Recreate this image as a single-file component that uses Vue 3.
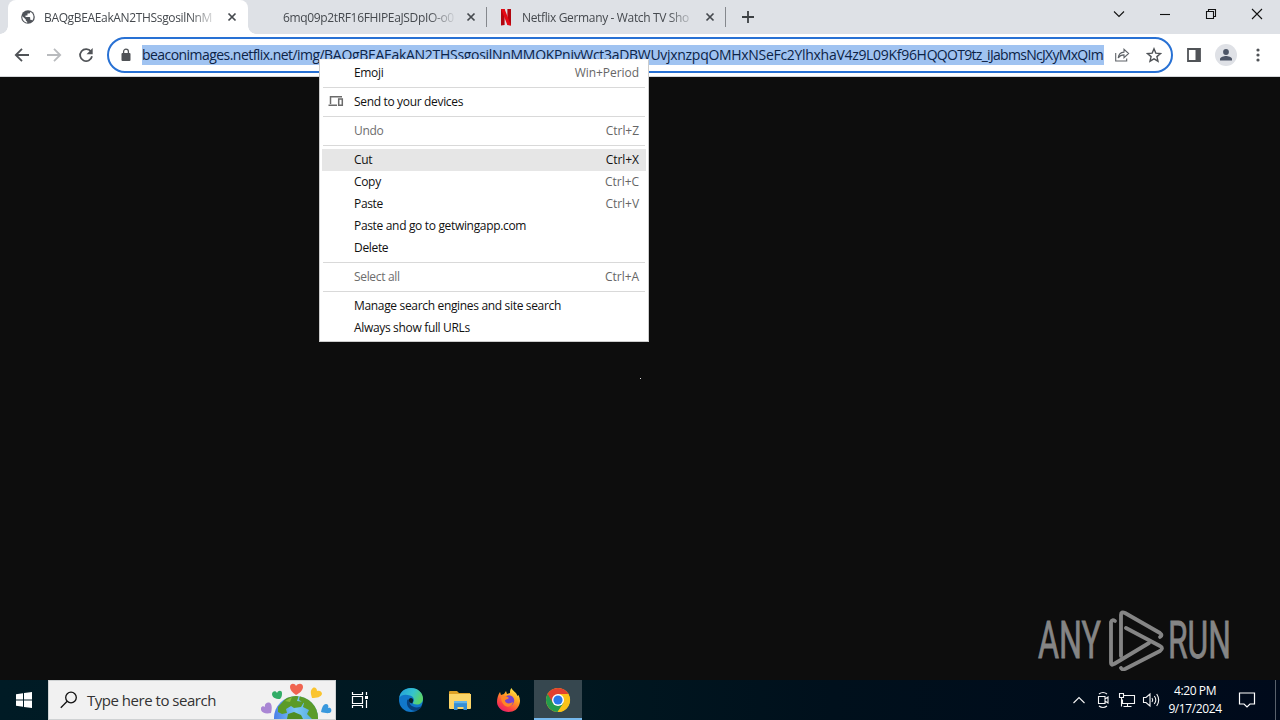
<script setup>
import { ref } from 'vue'

const tabs = ref([
  { id: 1, title: 'BAQgBEAEakAN2THSsgosilNnM', icon: 'globe', active: true },
  { id: 2, title: '6mq09p2tRF16FHIPEaJSDpIO-o0', icon: '', active: false },
  { id: 3, title: 'Netflix Germany - Watch TV Sho', icon: 'netflix', active: false }
])

const urlHost = ref('beaconimages.netflix.net/img/')
const urlPath = ref('BAQgBEAEakAN2THSsgosilNnMMQKPnivWct3aDBWUvjxnzpqOMHxNSeFc2YlhxhaV4z9L09Kf96H')
const urlTail = ref('QQOT9tz_iJabmsNcJXyMxQIm')

const menuGroups = [
  [{ label: 'Emoji', keys: 'Win+Period' }],
  [{ label: 'Send to your devices', icon: true }],
  [{ label: 'Undo', keys: 'Ctrl+Z', disabled: true }],
  [
    { label: 'Cut', keys: 'Ctrl+X', hover: true },
    { label: 'Copy', keys: 'Ctrl+C' },
    { label: 'Paste', keys: 'Ctrl+V' },
    { label: 'Paste and go to getwingapp.com' },
    { label: 'Delete' }
  ],
  [{ label: 'Select all', keys: 'Ctrl+A', disabled: true }],
  [
    { label: 'Manage search engines and site search' },
    { label: 'Always show full URLs' }
  ]
]
</script>

<template>
  <div class="desktop">
    <div class="tab-strip">
      <div v-for="tab in tabs" :key="tab.id" class="tab" :class="{ 'is-active': tab.active }">
        <span class="tab-icon">
          <svg v-if="tab.icon === 'globe'" width="14" height="14" viewBox="0 0 14 14">
            <circle cx="7" cy="7" r="6.8" fill="#50545a" />
            <path d="M1.4 6.2 4.8 9.4v1.2l1.4 1.2v.9C3.500 12.400 1.300 10 1.300 7zM9.200 1.700v.5c0 .8-.6 1.400-1.400 1.400H6.500v1.300c0 .4-.3.700-.7.700H4.500V7h4c.4 0 .7.300.7.700v2h.7c.6 0 1.100.4 1.300.9 2.500-3 1.300-7.500-2-8.900z" fill="#fff" />
          </svg>
          <svg v-else-if="tab.icon === 'netflix'" class="netflix" width="14" height="18" viewBox="0 0 14 18">
            <path d="M2 1h3.600v16L2 17.400zM8.400 1H12v16.400L8.400 17z" fill="#b1060f" />
            <path d="M2 1h3.600L12 17.400 8.400 17z" fill="#e50914" />
          </svg>
        </span>
        <span class="tab-title">{{ tab.title }}</span>
        <svg class="tab-close" width="10" height="10" viewBox="0 0 10 10">
          <path d="M1.500 1.500l7 7M8.500 1.500l-7 7" stroke="#45494e" stroke-width="1.700" />
        </svg>
      </div>
      <svg class="new-tab" width="14" height="14" viewBox="0 0 14 14">
        <path d="M7 1v12M1 7h12" stroke="#3c4043" stroke-width="1.800" />
      </svg>
      <div class="window-controls">
        <svg width="46" height="28" viewBox="0 0 46 28"><path d="M18 11.500l5 5 5-5" /></svg>
        <svg width="46" height="28" viewBox="0 0 46 28"><path d="M18 14.500h10" /></svg>
        <svg width="46" height="28" viewBox="0 0 46 28"><path d="M18.500 11.500h7v7h-7zM20.500 11.500v-2h7v7h-2" /></svg>
        <svg width="46" height="28" viewBox="0 0 46 28"><path d="M18 9l10 10M28 9l-10 10" /></svg>
      </div>
    </div>

    <div class="toolbar">
      <div class="nav-buttons">
        <svg width="16" height="16" viewBox="0 0 16 16"><path d="M15 8H2M8 1.800 1.800 8 8 14.200" /></svg>
        <svg class="is-disabled" width="16" height="16" viewBox="0 0 16 16"><path d="M1 8h13M8 1.800 14.200 8 8 14.200" /></svg>
        <svg width="16" height="16" viewBox="0 0 16 16">
          <path d="M13 4.600A6 6 0 1 0 14 9.300" />
          <path d="M14.700 1v6.200H8.500z" fill="#505357" stroke="none" />
        </svg>
      </div>
      <div class="address-bar">
        <svg class="lock" width="10" height="14" viewBox="0 0 10 14">
          <rect x="0.500" y="5" width="9" height="8" rx="1" fill="#505357" />
          <path d="M2.600 5.500V3.600a2.400 2.400 0 0 1 4.800 0v1.900" fill="none" stroke="#505357" stroke-width="1.300" />
        </svg>
        <div class="url"><span class="url-host">{{ urlHost }}</span><span class="url-path">{{ urlPath }}</span><span class="url-tail">{{ urlTail }}</span></div>
        <svg class="share" width="16" height="16" viewBox="0 0 16 16">
          <path d="M1.700 6v8h11v-2.500M4.200 11c.4-3.800 2.500-5.700 5.800-5.900V2.300l4.600 4.200L10 10.700V7.900C7.200 7.900 5.500 9 4.200 11z" fill="none" stroke="#5f6368" stroke-width="1.100" />
        </svg>
        <svg class="star" width="16" height="16" viewBox="0 0 16 16">
          <path d="M8 1.800l1.800 4.300 4.700.4-3.600 3.100 1.100 4.600L8 11.800l-4 2.400 1.100-4.600L1.500 6.500l4.700-.4z" fill="none" stroke="#505357" stroke-width="1.400" />
        </svg>
      </div>
      <svg class="side-panel" width="14" height="14" viewBox="0 0 14 14">
        <path d="M1 1h12v12H1z" fill="none" stroke="#505357" stroke-width="1.800" />
        <path d="M8.500 1H13v12H8.500z" fill="#505357" />
      </svg>
      <svg class="avatar" width="22" height="22" viewBox="0 0 22 22">
        <circle cx="11" cy="11" r="11" fill="#dfe1e6" />
        <circle cx="11" cy="8" r="2.900" fill="#4d5566" />
        <path d="M5 16.500v-1.400c0-2 4-3 6-3s6 1 6 3v1.400z" fill="#4d5566" />
      </svg>
      <svg class="more" width="4" height="14" viewBox="0 0 4 14">
        <circle cx="2" cy="2" r="1.600" /><circle cx="2" cy="7" r="1.600" /><circle cx="2" cy="12" r="1.600" />
      </svg>
    </div>

    <div class="page">
      <span class="image-dot"></span>
      <svg class="watermark" width="196" height="64" viewBox="0 0 196 64">
        <g fill="#858585" stroke="#858585" stroke-width="0.800" font-family="Roboto, sans-serif" font-size="51">
          <text x="3" y="51" textLength="63" lengthAdjust="spacingAndGlyphs">ANY</text>
          <text x="133" y="51" textLength="63" lengthAdjust="spacingAndGlyphs">RUN</text>
        </g>
        <g fill="none" stroke="#858585" stroke-width="3.800" stroke-linejoin="round" stroke-linecap="round">
          <path d="M86 49V8q0-4 4-2l35 20q3 2 0 4" />
          <path d="M80 14q-3-2-4 1v41q0 3 3 1l35-21" />
          <path d="M91 21l34 18q4 2 0 5L90 62q-3 1-4-1" />
        </g>
      </svg>
    </div>

    <div class="taskbar">
      <div class="start">
        <svg width="16" height="16" viewBox="0 0 16 16">
          <path d="M0 2.300 7 1.300v6.200H0zM8 1.100 16 0v7.500H8zM0 8.500h7v6.200L0 13.700zM8 8.500h8V16l-8-1.100z" fill="#fff" />
        </svg>
      </div>
      <div class="search">
        <svg class="search-icon" width="18" height="18" viewBox="0 0 18 18">
          <circle cx="11" cy="6.500" r="5.300" /><path d="M7.200 10.300.800 16.700" />
        </svg>
        <span class="search-text">Type here to search</span>
        <svg class="search-art" width="74" height="38" viewBox="0 0 74 38">
          <defs>
            <linearGradient id="ocean" x1="0" y1="0" x2="1" y2="0">
              <stop offset="0" stop-color="#4a7ee8" /><stop offset="0.500" stop-color="#7ac8f5" /><stop offset="1" stop-color="#4ba3dc" />
            </linearGradient>
            <clipPath id="earth"><circle cx="35" cy="37" r="22" /></clipPath>
          </defs>
          <circle cx="35" cy="37" r="22" fill="url(#ocean)" />
          <g clip-path="url(#earth)">
            <path d="M17 26l9-10 12-2-2 6 7 1-3 5-7 1-3-2-5 3 1 4-5 1-4-2zM39 14l13 4 8 20h-9l-5-5 2-4-6-3 1-4-5-3z" fill="#5b9b28" />
            <path d="M26 38l1-5 6-2 7 3 2 4z" fill="#4f8d23" />
            <path d="M24 20l7-4-2 5z" fill="#8abc3c" />
          </g>
          <path d="M35 14c-4-3-6-5-6-8 0-4 5-4 6-1 2-3 7-3 7 1 0 3-3 6-7 8z" fill="#f06450" />
          <path d="M19 18c-5 0-8-2-8-5s4-4 5-1c1-3 5-3 5 0 0 2 0 4-2 6z" fill="#32ad67" />
          <path d="M51 17c-1-4-2-7 0-9 2-3 5-1 5 2 3-1 5 1 5 3-1 3-5 4-10 4z" fill="#fac42e" />
          <path d="M10 32c-5 1-9 0-10-3-1-3 2-5 4-3-1-4 4-6 6-3 1 2 1 5 0 9z" fill="#a986d4" />
          <path d="M60 31c1-4 2-8 5-8 2 0 3 2 2 4 3-1 4 2 3 4-2 2-6 1-10 0z" fill="#3898dd" />
        </svg>
      </div>
      <div class="task-view">
        <svg width="18" height="18" viewBox="0 0 18 18" fill="none" stroke="#fff" stroke-width="1.200">
          <path d="M1.500 1v2.500h10V1M1.500 17v-2.500h10V17M1.500 5.500h10v7h-10zM15.500 1v3M15.500 9v8" />
          <path d="M14 5h3v3h-3z" fill="#fff" stroke="none" />
        </svg>
      </div>
      <div class="app">
        <svg width="26" height="26" viewBox="0 0 26 26">
          <defs>
            <linearGradient id="edgeTop" x1="0" y1="0" x2="1" y2="0.400">
              <stop offset="0" stop-color="#219cdb" /><stop offset="0.600" stop-color="#35c3ce" /><stop offset="1" stop-color="#59d36c" />
            </linearGradient>
          </defs>
          <circle cx="13" cy="13" r="12" fill="#1177c9" />
          <path d="M1.200 11C2 4.500 7 1 13 1c7 0 12 5 12 10.500 0 4-3 6-6 6s-4.500-1-4-2c2-2 1-6-3-7C7 7 3 8 1.200 11z" fill="url(#edgeTop)" />
          <path d="M9 14c-1 6 4 11 10 9.500 2-.7 4-2.500 5-4.500-2.500 1.500-6 2-9 .5-3-1.200-4-3.500-3-6.500-2-1-3-.5-3 1z" fill="#08417d" />
          <path d="M11 12c1.500-2 4-1 4.200 1 .2 1.500-1 2-.5 3-2 1-4.500-1.500-3.700-4z" fill="#071f2c" />
        </svg>
      </div>
      <div class="app">
        <svg width="24" height="22" viewBox="0 0 24 22">
          <path d="M1 3q0-1 1-1h7l2 2h11v5H1z" fill="#dea126" />
          <path d="M1 5h22v14q0 1-1 1H2q-1 0-1-1z" fill="#fcd568" />
          <path d="M6 13q0-1 1-1h11q1 0 1 1v8h-3.500v-3h-6v3H6z" fill="#368ed4" />
          <path d="M6 12h13v2.200H6z" fill="#65b5ea" />
        </svg>
      </div>
      <div class="app">
        <svg class="firefox" width="25" height="25" viewBox="0 0 25 25">
          <defs>
            <linearGradient id="fox" x1="0.800" y1="0" x2="0.200" y2="1">
              <stop offset="0" stop-color="#fff04d" /><stop offset="0.400" stop-color="#ff9e22" /><stop offset="0.750" stop-color="#fb3f45" /><stop offset="1" stop-color="#e41a70" />
            </linearGradient>
          </defs>
          <path d="M4 4l1 3 3-1 2-3 1 3 3-1c0-2 0-3 1.500-5 1 3 5 4 6 8l1-1c1.500 3 2 6 1 9-1.500 5-5.500 8-11 8S1 20 1 14c0-4 1-7 3-10z" fill="url(#fox)" />
          <circle cx="13" cy="12.500" r="5.200" fill="#7543cf" />
          <path d="M5 9c3-2 6-1 8 1-2 2-4 1-4 3 1 3 5 3 8 1-1 5-6 6-9 3-2-2-3-5-3-8z" fill="#ff8626" />
        </svg>
      </div>
      <div class="app is-active">
        <svg width="26" height="26" viewBox="0 0 26 26">
          <circle cx="13" cy="13" r="12" fill="#fbc218" />
          <path d="M13 13 2.600 7a12 12 0 0 0 10 18l6-9z" fill="#249b4c" />
          <path d="M2.600 7a12 12 0 0 1 20.800 0H13l-5 9z" fill="#e2402f" />
          <path d="M23.400 7a12 12 0 0 1-10.800 18l6-9z" fill="#fbc218" />
          <circle cx="13" cy="13" r="6" fill="#fff" />
          <circle cx="13" cy="13" r="4.600" fill="#2878e8" />
        </svg>
      </div>
      <div class="tray">
        <svg width="24" height="20" viewBox="0 0 24 20"><path d="M6.500 13 12 7.500l5.500 5.500" /></svg>
        <svg width="24" height="20" viewBox="0 0 24 20">
          <path d="M8 4q4-3 8 0M8 16q4 3 8 0M7.500 6.500h6.500v7H7.500zM14 9l3-2v6l-3-2" />
        </svg>
        <svg width="24" height="20" viewBox="0 0 24 20">
          <path d="M9 5.500h10.500v8H7.500v-4M12.500 13.500v3M8.500 16.500h8M4.500 3.500h4v4h-4zM6.500 7.500v9" />
        </svg>
        <svg width="24" height="20" viewBox="0 0 24 20">
          <path d="M4.500 7.500h2.500l4-3.500v12l-4-3.500H4.500zM13 8q1.500 2 0 4M15.300 6q3 4 0 8M17.700 4q4 6 0 12" />
        </svg>
      </div>
      <div class="clock">
        <span class="clock-time">4:20 PM</span>
        <span class="clock-date">9/17/2024</span>
      </div>
      <svg class="notifications" width="18" height="18" viewBox="0 0 18 18">
        <path d="M1.500 2h15v11H12l-3 3-3-3H1.500z" fill="none" stroke="#fff" stroke-width="1.200" />
      </svg>
      <div class="show-desktop"></div>
    </div>

    <div class="context-menu">
      <div v-for="(group, index) in menuGroups" :key="index" class="menu-group">
        <div
          v-for="item in group"
          :key="item.label"
          class="menu-item"
          :class="{ 'is-disabled': item.disabled, 'is-hover': item.hover }"
        >
          <span class="menu-icon">
            <svg v-if="item.icon" width="16" height="12" viewBox="0 0 16 12" fill="none" stroke="#6b6b6b" stroke-width="1.500">
              <path d="M2.500 9V1.700H14M.500 10.200h8.500M10.700 4h3.600v6.200h-3.600z" />
            </svg>
          </span>
          <span class="menu-label">{{ item.label }}</span>
          <span v-if="item.keys" class="menu-keys">{{ item.keys }}</span>
        </div>
      </div>
    </div>
  </div>
</template>

<style>
body {
  margin: 0;
  overflow: hidden;
}
</style>

<style scoped>
.desktop {
  position: relative;
  display: flex;
  flex-direction: column;
  width: 1280px;
  height: 720px;
  overflow: hidden;
  background: #0d0d0d;
  font-family: 'Open Sans', 'Noto Sans', sans-serif;
  font-size: 12px;
}

svg {
  display: block;
  flex: none;
}

.tab-strip {
  display: flex;
  height: 34px;
  padding-left: 8px;
  background: #dee1e6;
}

.tab {
  position: relative;
  display: flex;
  align-items: center;
  box-sizing: border-box;
  width: 239px;
  height: 34px;
  padding-left: 14px;
  color: #45494e;
}

.tab.is-active {
  width: 240px;
  padding-left: 13px;
  background: #fff;
  border-radius: 8px 8px 0 0;
}

.tab.is-active::before,
.tab.is-active::after {
  content: '';
  position: absolute;
  bottom: 0;
  width: 8px;
  height: 8px;
}

.tab.is-active::before {
  left: -8px;
  background: radial-gradient(circle at 0 0, transparent 7.5px, #fff 8px);
}

.tab.is-active::after {
  right: -8px;
  background: radial-gradient(circle at 100% 0, transparent 7.5px, #fff 8px);
}

.tab:not(.is-active)::after {
  content: '';
  position: absolute;
  right: 0;
  top: 7px;
  width: 1px;
  height: 20px;
  background: #85888d;
}

.tab-icon {
  width: 14px;
  margin-right: 9px;
}

.tab:not(.is-active) .tab-icon {
  margin-right: 7px;
}

.netflix {
  margin-left: -2px;
}

.tab-title {
  width: 171px;
  margin-right: 12px;
  overflow: hidden;
  white-space: nowrap;
  letter-spacing: -0.35px;
  -webkit-mask-image: linear-gradient(90deg, #000 85%, transparent 102%);
  mask-image: linear-gradient(90deg, #000 85%, transparent 102%);
}

.new-tab {
  margin: 10px 0 0 15px;
}

.window-controls {
  display: flex;
  margin-left: auto;
}

.window-controls svg {
  fill: none;
  stroke: #111;
  stroke-width: 1.1;
}

.toolbar {
  display: flex;
  align-items: center;
  box-sizing: border-box;
  height: 43px;
  background: #fff;
  border-bottom: 1px solid #d5d7da;
}

.nav-buttons {
  display: flex;
  gap: 16px;
  margin-left: 14px;
}

.nav-buttons svg {
  fill: none;
  stroke: #505357;
  stroke-width: 1.8;
}

.nav-buttons .is-disabled {
  stroke: #b9bbbe;
}

.address-bar {
  display: flex;
  align-items: center;
  box-sizing: border-box;
  width: 1066px;
  height: 36px;
  margin-left: 13px;
  padding-left: 12px;
  border: 2px solid #2871d4;
  border-radius: 18px;
}

.url {
  width: 962px;
  height: 20px;
  margin-left: 11px;
  overflow: hidden;
  background: #a0c3f1;
  color: #0c2347;
  font-size: 14px;
  line-height: 20px;
  white-space: nowrap;
}

.url-host {
  letter-spacing: -0.55px;
}

.url-path {
  letter-spacing: -0.3px;
}

.url-tail {
  letter-spacing: -0.7px;
}

.share {
  margin-left: 10px;
}

.star {
  margin-left: 16px;
}

.side-panel {
  margin-left: 14px;
}

.avatar {
  margin-left: 14px;
}

.more {
  margin-left: 19px;
  fill: #505357;
}

.page {
  position: relative;
  height: 603px;
  background: #0d0d0d;
}

.image-dot {
  position: absolute;
  left: 640px;
  top: 301px;
  width: 1px;
  height: 1px;
  background: #e0e0e0;
}

.watermark {
  position: absolute;
  left: 1035px;
  top: 530px;
}

.taskbar {
  display: flex;
  align-items: center;
  height: 40px;
  background: linear-gradient(90deg, #001b25 0%, #001720 45%, #00101c 65%, #000a1b 100%);
}

.start {
  display: flex;
  justify-content: center;
  width: 48px;
}

.search {
  display: flex;
  align-items: center;
  box-sizing: border-box;
  width: 288px;
  height: 40px;
  padding-left: 11px;
  background: #f1f1f1;
  border: 1px solid #cfd2d3;
}

.search-icon {
  fill: none;
  stroke: #111;
  stroke-width: 1.3;
}

.search-text {
  width: 150px;
  margin-left: 9px;
  color: #333;
  font-size: 15px;
  white-space: nowrap;
  letter-spacing: -0.48px;
}

.search-art {
  margin-left: 25px;
}

.task-view {
  display: flex;
  justify-content: center;
  width: 48px;
  margin-right: 3px;
}

.app {
  display: flex;
  align-items: center;
  justify-content: center;
  box-sizing: border-box;
  width: 48px;
  height: 40px;
  margin-right: 1px;
}

.app.is-active {
  padding-top: 2px;
  background: #36474f;
  border-bottom: 2px solid #76b9ed;
}

.firefox {
  margin-right: 2px;
}

.tray {
  display: flex;
  margin-left: auto;
}

.tray svg {
  fill: none;
  stroke: #f4f4f4;
  stroke-width: 1.1;
}

.clock {
  display: flex;
  flex-direction: column;
  align-items: center;
  width: 64px;
  color: #fff;
  line-height: 18px;
  white-space: nowrap;
  letter-spacing: -0.4px;
}

.notifications {
  margin-left: 11px;
}

.show-desktop {
  width: 4px;
  height: 40px;
  margin-left: 19px;
  border-left: 1px solid #59616c;
}

.context-menu {
  position: absolute;
  left: 319px;
  top: 59px;
  box-sizing: border-box;
  width: 330px;
  height: 283px;
  padding: 2px;
  background: #fff;
  border: 1px solid #ccc;
  border-top-color: #f4f4f4;
}

.menu-group + .menu-group::before {
  content: '';
  display: block;
  height: 1px;
  margin: 3px 1px;
  background: #d9d9d9;
}

.menu-item {
  display: flex;
  align-items: center;
  box-sizing: border-box;
  height: 22px;
  padding: 0 7px 2px 0;
  color: #111;
  letter-spacing: -0.33px;
}

.menu-icon {
  width: 16px;
  margin: 0 10px 0 6px;
}

.menu-keys {
  margin-left: auto;
  color: #666;
  letter-spacing: -0.05px;
}

.menu-item.is-disabled {
  color: #6d6d6d;
}

.menu-item.is-hover {
  background: #e6e6e6;
}

.menu-item.is-hover .menu-keys {
  color: #111;
}
</style>
